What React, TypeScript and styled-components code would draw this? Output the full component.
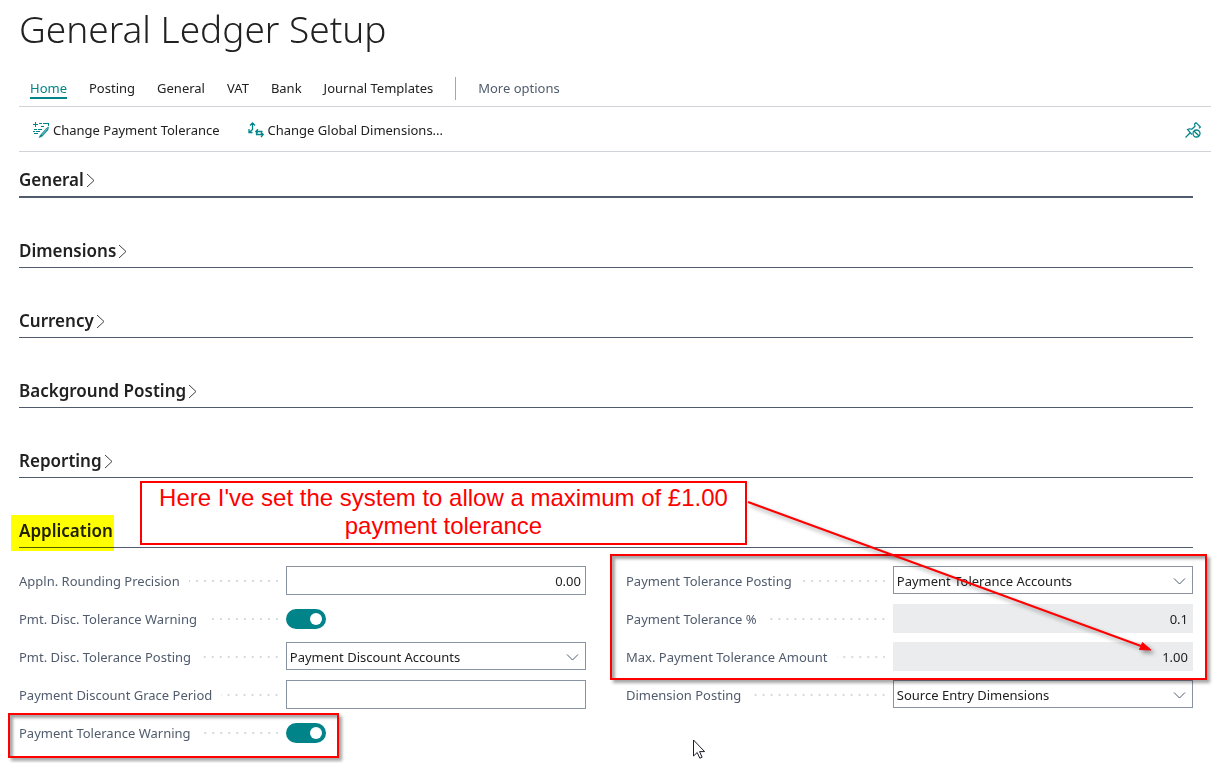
import React, { useState } from 'react';
import styled, { createGlobalStyle, css } from 'styled-components';

const teal = '#008489';
const ink = '#212121';
const slate = '#505c6d';
const red = '#ff0000';
const shadow = '3px 3px 3px rgba(0, 0, 0, 0.35)';

const GlobalStyle = createGlobalStyle`
  *, *::before, *::after { box-sizing: border-box; }
  body {
    margin: 0;
    background: #fff;
    color: ${ink};
    font: 13px/20px "Segoe UI", "Noto Sans", sans-serif;
    overflow-x: hidden;
  }
  button, input, select { font: inherit; color: inherit; }
`;

const Page = styled.main`
  padding: 0 3px 20px 19px;
`;

const Title = styled.h1`
  margin: 0;
  height: 70px;
  font-size: 37px;
  line-height: 58px;
  font-weight: 300;
`;

const TabBar = styled.nav`
  display: flex;
  align-items: center;
  gap: 22px;
  height: 37px;
  padding-left: 11px;
  border-bottom: 1px solid #d0d3d7;
`;

const Tab = styled.button<{ $active?: boolean; $muted?: boolean }>`
  padding: 2px 0 0;
  height: 22px;
  border: 0;
  border-bottom: 2px solid ${p => (p.$active ? teal : 'transparent')};
  background: none;
  color: ${p => (p.$active ? teal : p.$muted ? slate : ink)};
  line-height: 18px;
  white-space: nowrap;
`;

const TabDivider = styled.span`
  width: 1px;
  height: 23px;
  background: #a0a7b4;
`;

const ActionBar = styled.div`
  display: flex;
  align-items: center;
  gap: 28px;
  height: 45px;
  padding: 2px 10px 0 14px;
  border-bottom: 1px solid #d0d3d7;
`;

const Action = styled.button<{ $end?: boolean }>`
  display: flex;
  align-items: center;
  gap: 4px;
  padding: 0;
  border: 0;
  background: none;
  white-space: nowrap;
  ${p => p.$end && css`margin-left: auto;`}
  svg { color: ${teal}; display: block; }
`;

const Body = styled.div`
  position: relative;
  margin-right: 18px;
`;

const SectionHeader = styled.h2<{ $strong?: boolean }>`
  display: flex;
  align-items: flex-end;
  margin: 0;
  height: ${p => (p.$strong ? 46 : 70)}px;
  padding-bottom: 3px;
  border-bottom: ${p => (p.$strong ? 2 : 1)}px solid ${slate};
  font-size: 17px;
  line-height: 26px;
  font-weight: 600;
`;

const SectionToggle = styled.button<{ $marked?: boolean }>`
  position: relative;
  display: flex;
  align-items: center;
  gap: 2px;
  padding: 0;
  border: 0;
  background: none;
  ${p =>
    p.$marked &&
    css`
      &::after {
        content: '';
        position: absolute;
        inset: -3px -1px -7px -8px;
        background: #ffff00;
        mix-blend-mode: multiply;
        pointer-events: none;
      }
    `}
`;

const FieldColumns = styled.div`
  display: grid;
  grid-template-columns: 1fr 1fr;
  column-gap: 40px;
  align-items: start;
  padding-top: 18px;
`;

const FieldColumn = styled.div`
  position: relative;
  display: grid;
  row-gap: 9px;
`;

const FieldRow = styled.div`
  position: relative;
  display: grid;
  grid-template-columns: minmax(0, 8fr) minmax(0, 9fr);
  height: 29px;
  align-items: start;
`;

const FieldLabel = styled.label`
  display: flex;
  align-items: center;
  gap: 9px;
  height: 29px;
  padding-right: 8px;
  color: ${slate};
  white-space: nowrap;
  &::after {
    content: '';
    flex: 1;
    height: 2px;
    background: linear-gradient(90deg, transparent 6px, #d6d9dd 6px) right top / 8px 2px repeat-x;
  }
`;

const TextInput = styled.input<{ $numeric?: boolean }>`
  width: 100%;
  height: 29px;
  padding: 0 4px 0 3px;
  border: 1px solid #8a93a2;
  border-radius: 0;
  background: #fff;
  text-align: ${p => (p.$numeric ? 'right' : 'left')};
  &:read-only {
    border-color: #ebecee;
    background: #ebecee;
  }
`;

const SelectBox = styled.div`
  position: relative;
  svg {
    position: absolute;
    right: 7px;
    top: 11px;
    pointer-events: none;
  }
`;

const Select = styled.select`
  display: block;
  width: 100%;
  height: 28px;
  padding: 2px 24px 0 3px;
  border: 1px solid #8a93a2;
  border-radius: 0;
  background: #fff;
  appearance: none;
`;

const Switch = styled.input`
  position: relative;
  appearance: none;
  width: 40px;
  height: 20px;
  margin: 5px 0 0;
  border-radius: 10px;
  background: #8a93a2;
  &::after {
    content: '';
    position: absolute;
    top: 4px;
    left: 4px;
    width: 12px;
    height: 12px;
    border-radius: 50%;
    background: #fff;
  }
  &:checked { background: ${teal}; }
  &:checked::after { left: 24px; }
`;

const Frame = styled.div`
  position: absolute;
  z-index: 1;
  border: 2px solid ${red};
  box-shadow: ${shadow}, inset ${shadow};
  pointer-events: none;
`;

const LimitFrame = styled(Frame)`
  inset: -12px -14px auto -16px;
  height: 126px;
`;

const WarningFrame = styled(Frame)`
  top: -5px;
  left: -11px;
  width: 331px;
  height: 45px;
`;

const Callout = styled.p`
  position: absolute;
  z-index: 1;
  top: 329px;
  left: 121px;
  width: 607px;
  margin: 0;
  padding: 1px 12px 3px;
  border: 2px solid ${red};
  background: #fff;
  color: ${red};
  font: 24px/28px Arial, "Liberation Sans", sans-serif;
  text-align: center;
`;

const Arrow = styled.svg`
  position: absolute;
  z-index: 2;
  top: 342px;
  left: 726px;
  pointer-events: none;
  filter: drop-shadow(3px 3px 2px rgba(0, 0, 0, 0.4));
`;

const Pointer = styled.svg`
  position: absolute;
  z-index: 2;
  top: 587px;
  left: 673px;
  pointer-events: none;
`;

const ToleranceIcon = () => (
  <svg width="16" height="16" viewBox="0 0 16 16" fill="none" stroke="currentColor" aria-hidden="true">
    <path d="M0 2.500h5M2.500 0v5M6 1.500h3M10 1.500h6M15.500 1v3M8 4.500h3M1 7.500h3M5 7.500h4M0 9.500h2M3 9.500h4M1 11.500h4" />
    <path d="M15.500 5l-1.800 1-6.200 7-1.500 2.500 3-1L15 8z" fill="currentColor" strokeWidth="0.500" />
    <path d="M14.500 6.500L9 12.800" stroke="#fff" strokeWidth="0.600" />
  </svg>
);

const DimensionsIcon = () => (
  <svg width="16" height="16" viewBox="0 0 16 16" fill="none" stroke="currentColor" strokeWidth="1.300" aria-hidden="true">
    <path d="M4.500 1v6.500L1.200 10.500M2 3.500L4.500 1 7 3.500M1 7v3.500h3.500" />
    <path d="M14.500 9.500H8M10 7.200L7.800 9.500l1.700 1.700M8.500 9.500v3h6.500M13 10.500l2.200 2-2.200 2.700" />
  </svg>
);

const UnpinIcon = () => (
  <svg width="16" height="16" viewBox="0 0 16 16" fill="none" stroke="currentColor" aria-hidden="true">
    <path d="M.5 15.500L5 11M6.800 12.500L2.500 7.500c1.500-.8 3-.8 4.300-.2L10 4.200 9.500 2 11 .7 15.300 5 14 6.300" strokeWidth="1.200" />
    <circle cx="11.500" cy="11.500" r="3.500" strokeWidth="1.300" />
    <path d="M9.200 9.200l4.600 4.600" strokeWidth="1.300" />
  </svg>
);

const ChevronRight = () => (
  <svg width="9" height="15" viewBox="0 0 9 15" fill="none" stroke="#404040" aria-hidden="true">
    <path d="M1 1l7 6.500L1 14" />
  </svg>
);

const ChevronDown = () => (
  <svg width="13" height="9" viewBox="0 0 13 9" fill="none" stroke="#505c6d" aria-hidden="true">
    <path d="M1 1.500l5.500 5.500L12 1.500" />
  </svg>
);

const tabs = ['Home', 'Posting', 'General', 'VAT', 'Bank', 'Journal Templates'];
const collapsed = ['General', 'Dimensions', 'Currency', 'Background Posting', 'Reporting'];

type Field = {
  id: string;
  label: string;
  kind: 'text' | 'number' | 'readonly' | 'select' | 'switch';
  value?: string;
  framed?: boolean;
};

const leftFields: Field[] = [
  { id: 'rounding', label: 'Appln. Rounding Precision', kind: 'number', value: '0.00' },
  { id: 'disc-warning', label: 'Pmt. Disc. Tolerance Warning', kind: 'switch' },
  { id: 'disc-posting', label: 'Pmt. Disc. Tolerance Posting', kind: 'select', value: 'Payment Discount Accounts' },
  { id: 'grace', label: 'Payment Discount Grace Period', kind: 'text', value: '' },
  { id: 'tol-warning', label: 'Payment Tolerance Warning', kind: 'switch', framed: true },
];

const rightFields: Field[] = [
  { id: 'tol-posting', label: 'Payment Tolerance Posting', kind: 'select', value: 'Payment Tolerance Accounts' },
  { id: 'tol-percent', label: 'Payment Tolerance %', kind: 'readonly', value: '0.1' },
  { id: 'tol-max', label: 'Max. Payment Tolerance Amount', kind: 'readonly', value: '1.00' },
  { id: 'dim-posting', label: 'Dimension Posting', kind: 'select', value: 'Source Entry Dimensions' },
];

const FieldControl = ({ field }: { field: Field }) => {
  switch (field.kind) {
    case 'switch':
      return <Switch id={field.id} type="checkbox" role="switch" defaultChecked />;
    case 'select':
      return (
        <SelectBox>
          <Select id={field.id} defaultValue={field.value}>
            <option>{field.value}</option>
          </Select>
          <ChevronDown />
        </SelectBox>
      );
    default:
      return (
        <TextInput
          id={field.id}
          type="text"
          defaultValue={field.value}
          $numeric={field.kind !== 'text'}
          readOnly={field.kind === 'readonly'}
        />
      );
  }
};

const Fields = ({ fields }: { fields: Field[] }) => (
  <>
    {fields.map(field => (
      <FieldRow key={field.id}>
        <FieldLabel htmlFor={field.id}>{field.label}</FieldLabel>
        <FieldControl field={field} />
        {field.framed && <WarningFrame />}
      </FieldRow>
    ))}
  </>
);

export default function App() {
  const [active, setActive] = useState('Home');
  return (
    <Page>
      <GlobalStyle />
      <Title>General Ledger Setup</Title>
      <TabBar>
        {tabs.map(tab => (
          <Tab key={tab} $active={tab === active} onClick={() => setActive(tab)}>
            {tab}
          </Tab>
        ))}
        <TabDivider />
        <Tab $muted>More options</Tab>
      </TabBar>
      <ActionBar>
        <Action><ToleranceIcon />Change Payment Tolerance</Action>
        <Action><DimensionsIcon />Change Global Dimensions...</Action>
        <Action $end aria-label="Unpin"><UnpinIcon /></Action>
      </ActionBar>
      <Body>
        {collapsed.map((name, i) => (
          <SectionHeader key={name} $strong={i === 0}>
            <SectionToggle aria-expanded={false}>{name}<ChevronRight /></SectionToggle>
          </SectionHeader>
        ))}
        <SectionHeader>
          <SectionToggle $marked aria-expanded>Application</SectionToggle>
        </SectionHeader>
        <FieldColumns>
          <FieldColumn><Fields fields={leftFields} /></FieldColumn>
          <FieldColumn>
            <Fields fields={rightFields} />
            <LimitFrame />
          </FieldColumn>
        </FieldColumns>
        <Callout>Here I've set the system to allow a maximum of £1.00 payment tolerance</Callout>
        <Arrow width="420" height="170" viewBox="0 0 420 170" aria-hidden="true">
          <path d="M3 8L396 152" stroke={red} strokeWidth="2" fill="none" />
          <path d="M406 156L394.500 155.500 397.500 148.500z" fill={red} stroke={red} strokeWidth="1" />
        </Arrow>
        <Pointer width="14" height="21" viewBox="0 0 14 21" aria-hidden="true">
          <path d="M1.500 1v16l3.700-3.500 2.600 5.700 2.300-1-2.500-5.600h5z" fill="#fff" stroke="#1c1c2c" />
        </Pointer>
      </Body>
    </Page>
  );
}
